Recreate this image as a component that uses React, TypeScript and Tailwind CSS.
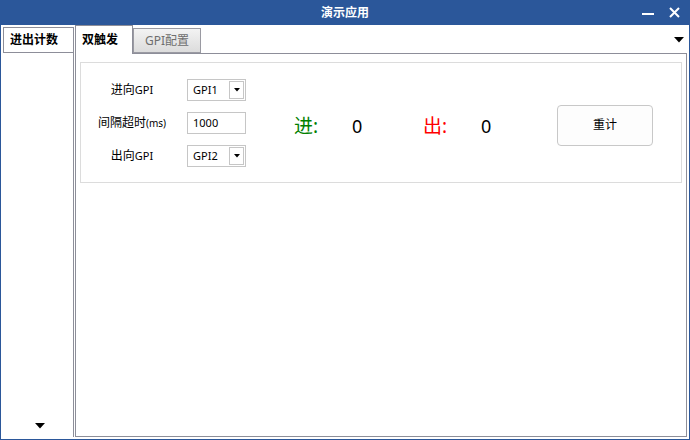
import React from 'react';

const font = "font-['Noto_Sans','Noto_Sans_CJK_SC',sans-serif]";

function Caret({ className = '' }: { className?: string }) {
  return (
    <svg width="10" height="6" viewBox="0 0 10 6" className={className}>
      <path d="M0 0H10L5 5.5Z" fill="#000" />
    </svg>
  );
}

function Select({ value }: { value: string }) {
  return (
    <div className="w-[59px] h-[22px] border border-[#c6c6c6] bg-white flex items-center pl-[5px] text-[11px] text-black">
      <span>{value}</span>
      <div className="ml-auto mr-[1px] w-[15px] h-[18px] border border-[#c6c6c6] flex items-center justify-center">
        <svg width="6" height="4" viewBox="0 0 6 4">
          <path d="M0 0H6L3 3.5Z" fill="#000" />
        </svg>
      </div>
    </div>
  );
}

export default function App() {
  return (
    <div className={`w-[690px] h-[440px] bg-[#2b579a] flex flex-col ${font}`}>
      {/* Title bar */}
      <div className="h-[25px] relative flex items-center justify-center text-white text-[12px] font-bold">
        演示应用
        <div className="absolute right-[10px] top-0 h-full flex items-center gap-[15px]">
          <div className="w-[12px] h-[2px] bg-white mt-[2px]" />
          <svg width="11" height="11" viewBox="0 0 11 11">
            <path d="M1 1L10 10M10 1L1 10" stroke="#fff" strokeWidth="2" />
          </svg>
        </div>
      </div>

      {/* Body */}
      <div className="flex-1 mx-px mb-px bg-white flex">
        {/* Left tab control */}
        <div className="w-[73px] flex flex-col">
          <div className="ml-[2px] mt-[2px] h-[26px] border border-[#8d8e99] flex items-center pl-[6px] text-[12px] font-bold text-black">
            进出计数
          </div>
          <div className="flex-1 border-r border-[#8d8e99] mb-[2px] flex items-end justify-center pl-[5px] pb-[8px]">
            <Caret />
          </div>
        </div>

        {/* Right tab control */}
        <div className="flex-1 ml-px mr-[2px] flex flex-col">
          <div className="h-[28px] flex items-end">
            <div className="relative z-10 w-[58px] h-[29px] -mb-px border-l border-t border-r border-[#8d8e99] bg-white flex items-center pl-[6px] text-[12px] font-bold text-black">
              双触发
            </div>
            <div className="w-[68px] h-[25px] border border-[#9a9aa2] bg-gradient-to-b from-[#f3f3f3] to-[#dcdcdc] flex items-center justify-center text-[12px] text-[#6e6e6e]">
              GPI配置
            </div>
            <div className="ml-auto mr-[3px] self-center mt-[2px]">
              <Caret />
            </div>
          </div>

          <div className="flex-1 mb-[2px] border border-[#8d8e99] flex flex-col">
            {/* Group box */}
            <div className="mt-[8px] mx-[4px] h-[121px] border border-[#dcdcdc] flex items-start pt-[16px]">
              <div className="flex flex-col gap-[11px]">
                <div className="flex items-center h-[22px]">
                  <span className="w-[102px] text-center text-[12px] text-black">
                    进向<span className="text-[11px]">GPI</span>
                  </span>
                  <div className="ml-[4px]">
                    <Select value="GPI1" />
                  </div>
                </div>
                <div className="flex items-center h-[22px]">
                  <span className="w-[102px] text-center text-[12px] text-black">
                    间隔超时<span className="text-[10px]">(ms)</span>
                  </span>
                  <div className="ml-[4px] w-[59px] h-[22px] border border-[#c6c6c6] flex items-center pl-[5px] text-[11px] text-black">
                    1000
                  </div>
                </div>
                <div className="flex items-center h-[22px]">
                  <span className="w-[102px] text-center text-[12px] text-black">
                    出向<span className="text-[11px]">GPI</span>
                  </span>
                  <div className="ml-[4px]">
                    <Select value="GPI2" />
                  </div>
                </div>
              </div>

              <div className="ml-[48px] h-[88px] pt-[6px] flex items-center">
                <span className="w-[58px] text-[19px] text-[#008000]">进:</span>
                <span className="w-[71px] text-[18px] text-black">0</span>
                <span className="w-[58px] text-[19px] text-[#ff0000]">出:</span>
                <span className="w-[76px] text-[18px] text-black">0</span>
                <button className="w-[96px] h-[41px] mb-[2px] rounded-[4px] border border-[#c8c8c8] bg-[#fdfdfd] text-[12px] text-black">
                  重计
                </button>
              </div>
            </div>
          </div>
        </div>
      </div>
    </div>
  );
}
